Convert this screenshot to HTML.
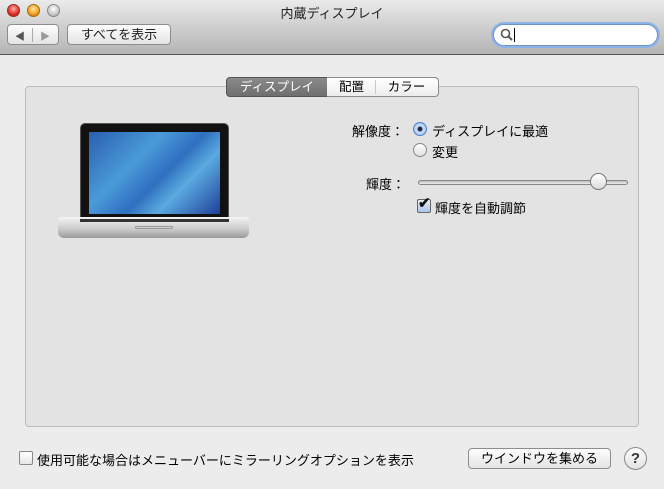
<!DOCTYPE html>
<html><head><meta charset="utf-8"><style>
*{margin:0;padding:0;box-sizing:border-box}
body{width:664px;height:489px;overflow:hidden;background:#ececec;font-family:"Liberation Sans","Noto Sans CJK JP",sans-serif;font-size:13px;color:#000;position:relative}
.a{position:absolute}
.tb{left:0;top:0;width:664px;height:55px;background:linear-gradient(#ebebeb,#d4d4d4 40%,#b5b5b5);border-bottom:1px solid #565656}
.btn{background:linear-gradient(#fdfdfd,#e4e4e4);border:1px solid #8d8d8d;border-radius:4px;text-align:center}
.light{width:13px;height:13px;border-radius:50%;top:4px}
.tab{top:77px;height:20px;line-height:18px;text-align:center;font-size:12.5px;border:1px solid #8a8a8a;background:linear-gradient(#fff,#ececec)}
</style></head><body>
<div class="a tb"></div>
<div class="a light" style="left:7px;background:radial-gradient(circle at 50% 35%,#ffb0a8,#e0302a 60%,#a01010);border:1px solid #9a2a20"></div>
<div class="a light" style="left:27px;background:radial-gradient(circle at 50% 35%,#ffe6a0,#f0a020 60%,#b06a00);border:1px solid #a06a10"></div>
<div class="a light" style="left:47px;background:radial-gradient(circle at 50% 35%,#fff,#c8c8c8 60%,#9a9a9a);border:1px solid #888"></div>
<div class="a" style="left:0;width:664px;top:3px;text-align:center;font-size:13px;color:#222">内蔵ディスプレイ</div>
<div class="a btn" style="left:7px;top:24px;width:52px;height:21px"></div>
<div class="a" style="left:32px;top:28px;width:1px;height:14px;background:#aaa"></div>
<div class="a" style="left:15px;top:28px;font-size:10px;color:#555">◀</div>
<div class="a" style="left:40px;top:28px;font-size:10px;color:#999">▶</div>
<div class="a btn" style="left:67px;top:24px;width:104px;height:21px;line-height:19px;font-size:13px;color:#222">すべてを表示</div>
<div class="a" style="left:493px;top:24px;width:165px;height:22px;border-radius:11px;background:#fff;border:1px solid #6f94c8;box-shadow:0 0 0 2px #8fb3e6"></div>
<svg class="a" style="left:500px;top:28px" width="14" height="14"><circle cx="5.5" cy="5.5" r="4" fill="none" stroke="#555" stroke-width="1.6"/><line x1="8.5" y1="8.5" x2="12" y2="12" stroke="#555" stroke-width="2"/></svg>
<div class="a" style="left:514px;top:28px;width:1px;height:14px;background:#000"></div>

<div class="a" style="left:25px;top:86px;width:614px;height:341px;background:#e3e3e3;border:1px solid #bdbdbd;border-radius:4px"></div>
<div class="a tab" style="left:226px;width:102px;border-radius:4px 0 0 4px;background:linear-gradient(#8a8a8a,#6f6f6f);color:#fff;border-color:#555">ディスプレイ</div>
<div class="a tab" style="left:327px;width:49px;border-left:none;border-right:none">配置</div>
<div class="a tab" style="left:375px;width:64px;border-left:none;border-radius:0 4px 4px 0">カラー</div>
<div class="a" style="left:375px;top:80px;width:1px;height:14px;background:#c8c8c8"></div>

<div class="a" style="left:80px;top:123px;width:149px;height:96px;background:#111;border-radius:5px 5px 0 0;border:1px solid #555"></div>
<div class="a" style="left:89px;top:132px;width:131px;height:82px;background:linear-gradient(135deg,#2a5fb0,#4a9ad8 35%,#2f6fc0 55%,#5aaae0 70%,#1f3f98)"></div>
<div class="a" style="left:58px;top:217px;width:191px;height:21px;background:linear-gradient(#f4f4f4,#c8c8c8 60%,#9a9a9a);border-radius:2px 2px 6px 6px"></div>
<div class="a" style="left:80px;top:219px;width:149px;height:3px;background:#333"></div>
<div class="a" style="left:135px;top:226px;width:38px;height:3px;border:1px solid #999;border-radius:2px"></div>

<div class="a" style="left:352px;top:121px">解像度：</div>
<div class="a" style="left:413px;top:122px;width:14px;height:14px;border-radius:50%;border:1px solid #4a7fc8;background:radial-gradient(#1a2a50 2px,#cfe0f7 3px,#8fb8ea)"></div>
<div class="a" style="left:432px;top:121px">ディスプレイに最適</div>
<div class="a" style="left:413px;top:143px;width:14px;height:14px;border-radius:50%;border:1px solid #888;background:linear-gradient(#fff,#e0e0e0)"></div>
<div class="a" style="left:432px;top:142px">変更</div>
<div class="a" style="left:366px;top:174px">輝度：</div>
<div class="a" style="left:418px;top:180px;width:210px;height:5px;border-radius:3px;border:1px solid #888;background:linear-gradient(#bbb,#eee)"></div>
<div class="a" style="left:590px;top:173px;width:17px;height:17px;border-radius:50%;border:1px solid #777;background:linear-gradient(#fff,#ddd)"></div>
<div class="a" style="left:417px;top:199px;width:14px;height:14px;border-radius:2px;border:1px solid #666;background:linear-gradient(#e8f0fb,#a6c4ea)"></div>
<div class="a" style="left:418px;top:194px;font-size:15px;font-weight:bold;color:#111">✔</div>
<div class="a" style="left:435px;top:198px">輝度を自動調節</div>

<div class="a" style="left:19px;top:451px;width:14px;height:14px;border:1px solid #888;border-radius:2px;background:linear-gradient(#fff,#e6e6e6)"></div>
<div class="a" style="left:37px;top:450px">使用可能な場合はメニューバーにミラーリングオプションを表示</div>
<div class="a btn" style="left:468px;top:448px;width:143px;height:21px;line-height:19px">ウインドウを集める</div>
<div class="a" style="left:624px;top:447px;width:23px;height:23px;border-radius:50%;border:1px solid #888;background:linear-gradient(#fff,#e2e2e2);text-align:center;line-height:21px;font-weight:bold;font-size:15px;color:#333">?</div>
</body></html>
